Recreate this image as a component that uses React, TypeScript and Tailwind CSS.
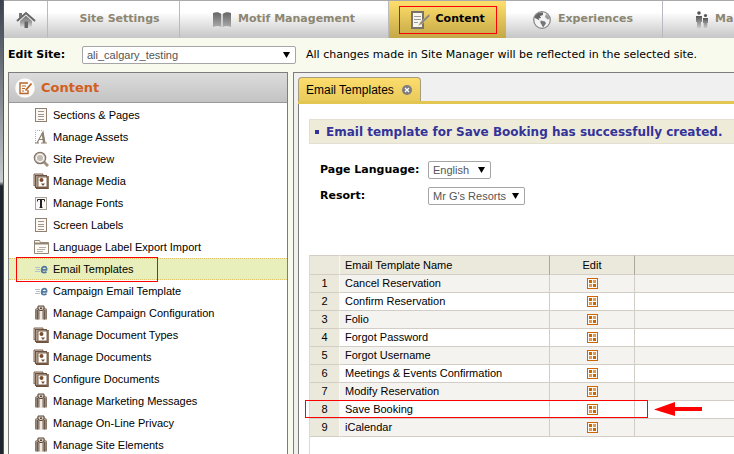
import type { ReactNode } from "react";

const verdana = "font-['Verdana','DejaVu_Sans',sans-serif]";
const arial = "font-['Arial','Liberation_Sans',sans-serif]";

function HomeIcon() {
  return (
    <svg width="20" height="20" viewBox="0 0 20 20" aria-hidden="true">
      <defs>
        <linearGradient id="home" x1="0" y1="0" x2="0" y2="1">
          <stop offset="0" stopColor="#777" />
          <stop offset="0.5" stopColor="#999" />
          <stop offset="1" stopColor="#e4e4e4" />
        </linearGradient>
      </defs>
      <path d="M4 11 L10 5.500 L16 11 V18 H4Z" fill="url(#home)" />
      <path d="M8.500 11.500 H12 V18 H8.500Z" fill="#666" />
      <path d="M1 11 L10 3 L19 11" fill="none" stroke="#666" strokeWidth="2" />
      <path d="M3 3 H6 V6 L3 8.500Z" fill="#777" />
    </svg>
  );
}

function BookIcon() {
  return (
    <svg width="20" height="16" viewBox="0 0 20 16" aria-hidden="true">
      <defs>
        <linearGradient id="book" x1="0" y1="0" x2="0" y2="1">
          <stop offset="0" stopColor="#666" />
          <stop offset="1" stopColor="#aaa" />
        </linearGradient>
      </defs>
      <path d="M1 1 C4 0 7 0 9.300 2 V15 C7 13.500 4 13.500 1 15Z" fill="url(#book)" />
      <path d="M19 1 C16 0 13 0 10.700 2 V15 C13 13.500 16 13.500 19 15Z" fill="url(#book)" />
    </svg>
  );
}

function NotePenIcon() {
  return (
    <svg width="20" height="18" viewBox="0 0 20 18" aria-hidden="true">
      <rect x="2" y="1" width="11" height="16" fill="#f7f5ee" stroke="#77736b" strokeWidth="2" />
      <path d="M4 5.500 H11 M4 8.500 H11 M4 11.500 H8" stroke="#999" />
      <path d="M19 3 L10.500 11 L8.500 14.500 L12 13 L20 5Z" fill="#8a8578" stroke="#d9c88a" strokeWidth="0.500" />
    </svg>
  );
}

function GlobeIcon() {
  return (
    <svg width="20" height="20" viewBox="0 0 20 20" aria-hidden="true">
      <circle cx="10" cy="10" r="8.300" fill="#f4f4f4" stroke="#8a8a8a" strokeWidth="1.300" />
      <path d="M3 6 C5 3 8 2 11 2.500 L11 5 L8 6 L9 8 L6.500 8.500 L7.500 10.500 L5 9 L3 8Z" fill="#666" />
      <path d="M14 4 L16.500 6 L18 9 L15.500 9.500 L13 7Z" fill="#999" />
      <path d="M8.500 10.500 L13 11.500 L14 13.500 L11 17.500 L9.800 15 L8.500 13Z" fill="#777" />
    </svg>
  );
}

function PeopleIcon() {
  return (
    <svg width="14" height="18" viewBox="0 0 14 18" aria-hidden="true">
      <defs>
        <linearGradient id="people" x1="0" y1="0" x2="0" y2="1">
          <stop offset="0" stopColor="#555" />
          <stop offset="1" stopColor="#ccc" />
        </linearGradient>
      </defs>
      <circle cx="4" cy="2" r="1.800" fill="#555" />
      <path d="M1 5 H7 V11 H6 V17 H2 V11 H1Z" fill="url(#people)" />
      <circle cx="10.500" cy="4.500" r="1.600" fill="#555" />
      <path d="M8 7 H13 V12 H12.300 V17 H8.700 V12 H8Z" fill="url(#people)" />
    </svg>
  );
}

function ContentBadge() {
  return (
    <svg width="20" height="20" viewBox="0 0 20 20" aria-hidden="true">
      <circle cx="10" cy="10" r="9.800" fill="#fbfaf8" />
      <path d="M13 5 H5 V15.500 H13 V12" fill="none" stroke="#b8662b" strokeWidth="1.400" />
      <path d="M7 8 H11 M7 10.500 H10 M7 13 H9" stroke="#b8662b" />
      <path d="M16.500 5.500 L10.500 12.500" stroke="#b8662b" strokeWidth="1.800" />
    </svg>
  );
}

type IconName = "page" | "assets" | "preview" | "media" | "fonts" | "labels" | "email" | "tools";

function ItemIcon({ name }: { name: IconName }) {
  const shapes: Record<IconName, ReactNode> = {
    page: (
      <>
        <rect x="2.500" y="1.500" width="11" height="13" fill="#fbf8f4" stroke="#8f8072" />
        <path d="M5 4.500 H11 M5 7.500 H11 M5 9.500 H11 M5 12.500 H11" stroke="#a2968a" />
      </>
    ),
    assets: (
      <>
        <path d="M2.500 14 V1.500 H9" fill="none" stroke="#b5aca2" strokeDasharray="1 1" />
        <path d="M2 14 H6 M8 14 H14 M4 14 L10 3 L12 14 M6.500 10.500 H11" fill="none" stroke="#8f8072" strokeWidth="1.200" />
        <path d="M9.500 4 L11 14" stroke="#8f8072" strokeWidth="2" />
      </>
    ),
    preview: (
      <>
        <path d="M11 11 L15 15" stroke="#a39281" strokeWidth="3" />
        <circle cx="7" cy="7" r="5.700" fill="#d3ccc4" stroke="#857668" strokeWidth="1.200" />
        <circle cx="7" cy="7" r="3.700" fill="#c4bcb3" stroke="#fff" />
      </>
    ),
    media: (
      <>
        <path d="M1 1 H10 V3 H3 V12 L1 13Z" fill="#d9cfc3" stroke="#7d6553" />
        <rect x="2.500" y="2.500" width="11" height="12" fill="#b09a85" stroke="#6d5442" />
        <rect x="5" y="4" width="9" height="10" fill="#fff" stroke="#7d6553" />
        <path d="M15 3 V15.500 H3" fill="none" stroke="#6f5039" strokeWidth="1.500" />
        <circle cx="8.500" cy="7" r="2" fill="#7a4e2d" />
        <path d="M8 10.500 H12 L10 13Z" fill="#7a4e2d" />
      </>
    ),
    fonts: (
      <>
        <rect x="2.500" y="2.500" width="11" height="12" fill="#faf9f7" stroke="#aaa39c" />
        <path d="M4.500 6.500 V4.500 H11.500 V6.500 M6.500 12.500 H9.500" fill="none" stroke="#222" />
        <path d="M8 4 V13" stroke="#222" strokeWidth="2" />
      </>
    ),
    labels: (
      <>
        <path d="M1.500 14.500 V1.500 H6.500 L7.500 3.500 H15.500 V14.500Z" fill="#fdfbf8" stroke="#958575" />
        <path d="M2 4.500 H15" stroke="#958575" strokeWidth="2" />
        <path d="M6 8.500 H13 M4 10.500 H12 M4 12.500 H10" stroke="#b6aca2" />
      </>
    ),
    email: (
      <>
        <path d="M2 6.500 H7 M3 8.500 H7 M2 10.500 H7" stroke="#b5c0cc" />
        <path d="M9 8.800 H13.500 C14.500 4.500 9 4.500 8.600 9 C8.400 12 11.500 12.200 13.500 10.800" fill="none" stroke="#54799f" strokeWidth="1.700" />
      </>
    ),
    tools: (
      <>
        <path d="M5 2 H11 L14 4 V14.500 H2 V4Z" fill="#a39488" />
        <path d="M4.500 5 V14.500 M11.500 5 V14.500" stroke="#6b594b" strokeWidth="1.500" />
        <path d="M2.500 5 V14 M13.500 5 V14" stroke="#8b7a6c" />
        <path d="M5 1 H11 V4 L9 5.500 H7 L5 4Z" fill="#d8cfc4" stroke="#5a4636" />
        <path d="M7 2.500 H9 V4 H7Z" fill="#5a4636" />
        <path d="M8 6 V15" stroke="#efe9e1" strokeWidth="2.500" />
      </>
    ),
  };
  return (
    <svg width="16" height="16" viewBox="0 0 16 16" className="shrink-0" aria-hidden="true">
      {shapes[name]}
    </svg>
  );
}

function EditIcon() {
  return (
    <svg width="11" height="11" viewBox="0 0 11 11" aria-hidden="true">
      <rect x="0.500" y="0.500" width="10" height="10" fill="#fffaf3" stroke="#cc6600" />
      <path d="M2 2 H5 V5 H2Z M6 6 H9 V9 H6Z" fill="#cc6600" />
      <path d="M6 2 H9 V5 H6Z M2 6 H5 V9 H2Z" fill="#dd9955" />
    </svg>
  );
}

function Dropdown({ id, value, className }: { id: string; value: string; className: string }) {
  return (
    <span className={`relative inline-flex h-[18px] ${className}`}>
      <select
        id={id}
        className={`w-full appearance-none rounded-xs border border-[#a5a5a5] bg-white pl-1 text-[11px] leading-4 font-normal text-[#555] ${arial}`}
      >
        <option>{value}</option>
      </select>
      <svg width="7" height="6" viewBox="0 0 7 6" className="pointer-events-none absolute top-[6px] right-[6px]" aria-hidden="true">
        <path d="M0 0 H7 L3.500 6Z" fill="#000" />
      </svg>
    </span>
  );
}

const tabs: { label: string; icon: ReactNode; className: string }[] = [
  { label: "Site Settings", icon: null, className: "w-[132px] justify-center pl-3" },
  { label: "Motif Management", icon: <BookIcon />, className: "w-[209px] gap-[6px] pl-8" },
];

const menu: { label: string; icon: IconName }[] = [
  { label: "Sections & Pages", icon: "page" },
  { label: "Manage Assets", icon: "assets" },
  { label: "Site Preview", icon: "preview" },
  { label: "Manage Media", icon: "media" },
  { label: "Manage Fonts", icon: "fonts" },
  { label: "Screen Labels", icon: "page" },
  { label: "Language Label Export Import", icon: "labels" },
  { label: "Email Templates", icon: "email" },
  { label: "Campaign Email Template", icon: "email" },
  { label: "Manage Campaign Configuration", icon: "tools" },
  { label: "Manage Document Types", icon: "media" },
  { label: "Manage Documents", icon: "media" },
  { label: "Configure Documents", icon: "media" },
  { label: "Manage Marketing Messages", icon: "tools" },
  { label: "Manage On-Line Privacy", icon: "tools" },
  { label: "Manage Site Elements", icon: "tools" },
];

const templates = [
  "Cancel Reservation",
  "Confirm Reservation",
  "Folio",
  "Forgot Password",
  "Forgot Username",
  "Meetings & Events Confirmation",
  "Modify Reservation",
  "Save Booking",
  "iCalendar",
];

const navItem = "flex shrink-0 items-center border-r border-[#b9b9bf] whitespace-nowrap";

function TopNav() {
  return (
    <nav className="flex h-[38px] overflow-hidden border-t border-[#a9a9a9] bg-linear-to-b from-white from-30% to-[#c6c6c6] text-[11px] font-bold text-[#8c8671]">
      <a href="#home" aria-label="Home" className={`${navItem} w-11 justify-center`}>
        <HomeIcon />
      </a>
      {tabs.map((t) => (
        <a key={t.label} href="#tab" className={`${navItem} ${t.className}`}>
          {t.icon}
          {t.label}
        </a>
      ))}
      <a
        href="#content"
        aria-current="page"
        className="flex w-[117px] shrink-0 items-center justify-center bg-linear-to-b from-[#ffdf6b] to-[#c5a747] text-black"
      >
        <span className="flex h-7 w-[98px] items-center gap-[6px] border border-[#f00] pl-[10px]">
          <NotePenIcon />
          Content
        </span>
      </a>
      <a href="#experiences" className={`${navItem} w-[157px] gap-[6px] pl-[26px]`}>
        <GlobeIcon />
        Experiences
      </a>
      <a href="#ma" className="flex shrink-0 items-center gap-[6px] pl-8">
        <PeopleIcon />
        Ma
      </a>
    </nav>
  );
}

function Sidebar() {
  return (
    <aside className="w-[280px] shrink-0 border border-b-0 border-[#7d7d7d] bg-white">
      <h2 className="flex h-[30px] items-center gap-[6px] border-b border-[#999] bg-linear-to-b from-[#dcdcdc] to-[#c3c3c3] pl-[6px] text-[13px] font-bold text-[#d35f1e]">
        <ContentBadge />
        Content
      </h2>
      <ul className={`pt-px text-[11px] text-black ${arial}`}>
        {menu.map((m) => {
          const active = m.label === "Email Templates";
          return (
            <li
              key={m.label}
              className={`relative h-[22px] border-y border-dotted ${active ? "border-[#dcc46a] bg-[#e8efba]" : "border-transparent"}`}
            >
              <a href="#item" className="flex h-5 items-center gap-1 pl-6 whitespace-nowrap">
                <ItemIcon name={m.icon} />
                {m.label}
              </a>
              {active && <span className="pointer-events-none absolute -top-[2px] left-[7px] h-[25px] w-[142px] border border-[#f00]" />}
            </li>
          );
        })}
      </ul>
    </aside>
  );
}

function TemplateTable() {
  const line = "border-b border-[#d2cec5]";
  return (
    <div className={`relative ml-[10px] flex-1 border-l border-[#d9d9d9] text-[11px] text-black ${arial}`}>
      <table className="w-full table-fixed border-separate border-spacing-0 text-left">
        <colgroup>
          <col className="w-[30px]" />
          <col className="w-[210px]" />
          <col className="w-[85px]" />
          <col />
        </colgroup>
        <thead>
          <tr className="h-5 bg-[#ebe9db]">
            <th scope="col" aria-label="Number" className="border-y border-r border-[#d2cec5] border-r-[#f8f7f0] p-0" />
            <th scope="col" className="border-y border-r border-[#d2cec5] border-r-[#aaa79d] p-0 pl-[5px] font-normal">
              Email Template Name
            </th>
            <th scope="col" className="border-y border-r border-[#d2cec5] border-r-[#aaa79d] p-0 text-center font-normal">
              Edit
            </th>
            <th aria-hidden="true" className="border-y border-[#d2cec5] p-0" />
          </tr>
        </thead>
        <tbody>
          {templates.map((name, i) => (
            <tr key={name} className="h-[18px] odd:bg-[#f5f3f0] even:bg-white">
              <td className={`${line} border-r border-r-[#f8f7f0] bg-[#ebe9db] p-0 text-center`}>{i + 1}</td>
              <td className={`${line} border-r p-0 pl-[5px]`}>{name}</td>
              <td className={`${line} border-r p-0`}>
                <button type="button" aria-label={`Edit ${name}`} className="mx-auto block">
                  <EditIcon />
                </button>
              </td>
              <td className={`${line} p-0`} />
            </tr>
          ))}
        </tbody>
      </table>
      <span className="pointer-events-none absolute top-[145px] -left-[5px] h-[18px] w-[343px] border border-[#f00]" />
      <svg width="48" height="14" viewBox="0 0 48 14" className="absolute top-[147px] left-[344px]" aria-hidden="true">
        <path d="M0 7.500 L21 0 V5 H48 V9 H21 V14Z" fill="#f00" />
      </svg>
    </div>
  );
}

function Workspace() {
  return (
    <main className="flex min-w-0 flex-1 flex-col border-t border-l border-[#7d7d7d] bg-[#f0f0f0] pt-1 pl-1">
      <div className="flex h-[27px] items-end border-b-3 border-[#e3c552]">
        <div className={`flex h-6 w-[123px] items-center gap-2 rounded-t border border-b-0 border-[#a59c7d] bg-linear-to-b from-[#fbdc6c] to-[#e9cb5c] pl-[7px] text-[12px] whitespace-nowrap text-black ${arial}`}>
          Email Templates
          <button type="button" aria-label="Close tab">
            <svg width="10" height="10" viewBox="0 0 10 10" aria-hidden="true">
              <circle cx="5" cy="5" r="5" fill="#7f7b80" />
              <path d="M3 3 L7 7 M7 3 L3 7" stroke="#fff" strokeWidth="1.300" />
            </svg>
          </button>
        </div>
      </div>
      <div className="flex flex-1 flex-col border-l border-[#7d7d7d] bg-white pt-[15px]">
        <p className="ml-[10px] flex h-[25px] items-center gap-[7px] border-y border-l border-[#e3e0d3] bg-[#efebd9] pl-[5px] text-[12px] font-bold whitespace-nowrap text-[#333399]">
          <span className="size-1 bg-[#333399]" />
          Email template for Save Booking has successfully created.
        </p>
        <div className="mt-[17px] ml-[21px] grid grid-cols-[108px_auto] items-center justify-start gap-y-2 text-[11px] font-bold whitespace-nowrap text-black">
          <label htmlFor="language">Page Language:</label>
          <Dropdown id="language" value="English" className="w-[63px]" />
          <label htmlFor="resort">Resort:</label>
          <Dropdown id="resort" value="Mr G's Resorts" className="w-[97px]" />
        </div>
        <div className="mt-[50px] flex flex-1">
          <TemplateTable />
        </div>
      </div>
    </main>
  );
}

export default function App() {
  return (
    <div className={`flex h-screen overflow-hidden bg-[#f8faee] ${verdana}`}>
      <div className="w-1 shrink-0 border-r border-[#50565f] bg-linear-to-b from-[#3b424d] from-0% via-[#c9ccd0] via-40% to-[#1e2531] to-41%" />
      <div className="flex min-w-0 flex-1 flex-col">
        <TopNav />
        <div className="flex h-[34px] shrink-0 items-center pl-1 text-[11px] whitespace-nowrap text-black">
          <label htmlFor="site" className="w-[74px] font-bold">
            Edit Site:
          </label>
          <Dropdown id="site" value="ali_calgary_testing" className="w-[214px]" />
          <span className="ml-[10px]">All changes made in Site Manager will be reflected in the selected site.</span>
        </div>
        <div className="flex min-h-0 flex-1 gap-[5px] pl-1">
          <Sidebar />
          <Workspace />
        </div>
      </div>
    </div>
  );
}
